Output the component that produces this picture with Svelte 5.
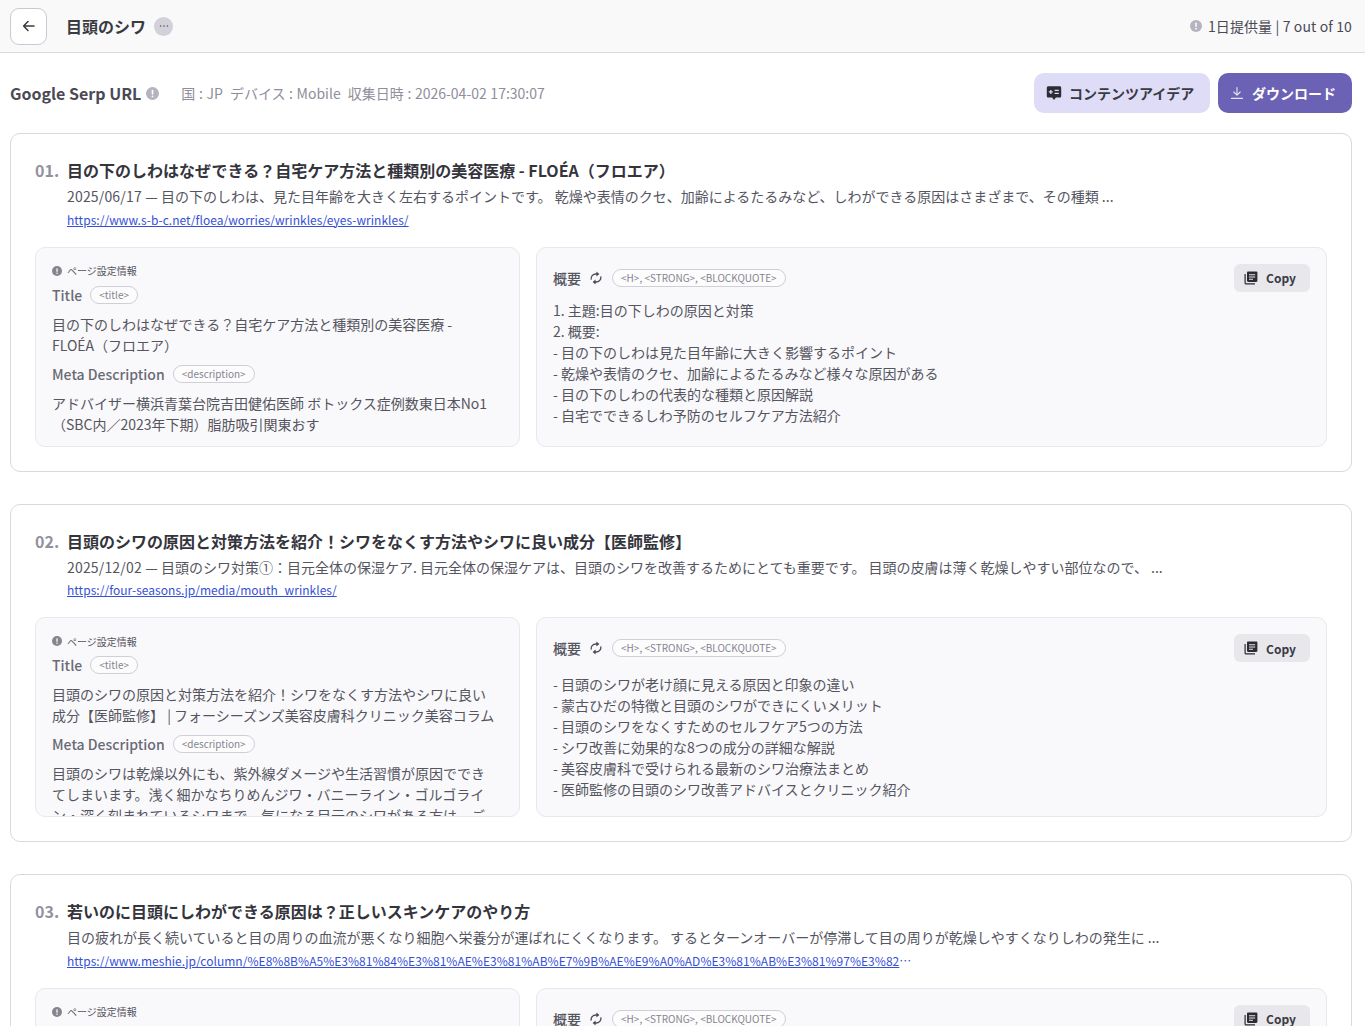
<script>
  const results = [
    {
      no: '01.',
      title: '目の下のしわはなぜできる？自宅ケア方法と種類別の美容医療 - FLOÉA（フロエア）',
      date: '2025/06/17 —',
      desc: ' 目の下のしわは、見た目年齢を大きく左右するポイントです。 乾燥や表情のクセ、加齢によるたるみなど、しわができる原因はさまざまで、その種類 ...',
      url: 'https://www.s-b-c.net/floea/worries/wrinkles/eyes-wrinkles/',
      pageTitle: '目の下のしわはなぜできる？自宅ケア方法と種類別の美容医療 - FLOÉA（フロエア）',
      meta: 'アドバイザー横浜青葉台院吉田健佑医師 ボトックス症例数東日本No1（SBC内／2023年下期）脂肪吸引関東おす',
      scrolled: false,
      summary: [
        '1. 主題:目の下しわの原因と対策',
        '2. 概要:',
        '- 目の下のしわは見た目年齢に大きく影響するポイント',
        '- 乾燥や表情のクセ、加齢によるたるみなど様々な原因がある',
        '- 目の下のしわの代表的な種類と原因解説',
        '- 自宅でできるしわ予防のセルフケア方法紹介'
      ]
    },
    {
      no: '02.',
      title: '目頭のシワの原因と対策方法を紹介！シワをなくす方法やシワに良い成分【医師監修】',
      date: '2025/12/02 —',
      desc: ' 目頭のシワ対策①：目元全体の保湿ケア. 目元全体の保湿ケアは、目頭のシワを改善するためにとても重要です。 目頭の皮膚は薄く乾燥しやすい部位なので、 ...',
      url: 'https://four-seasons.jp/media/mouth_wrinkles/',
      pageTitle: '目頭のシワの原因と対策方法を紹介！シワをなくす方法やシワに良い成分【医師監修】 | フォーシーズンズ美容皮膚科クリニック美容コラム',
      meta: '目頭のシワは乾燥以外にも、紫外線ダメージや生活習慣が原因でできてしまいます。浅く細かなちりめんジワ・バニーライン・ゴルゴライン・深く刻まれているシワまで、気になる目元のシワがある方は、ご相談ください。',
      scrolled: true,
      summary: [
        '- 目頭のシワに悩む方へ原因と対策方法を紹介する記事',
        '- 目頭のシワが老け顔に見える原因と印象の違い',
        '- 蒙古ひだの特徴と目頭のシワができにくいメリット',
        '- 目頭のシワをなくすためのセルフケア5つの方法',
        '- シワ改善に効果的な8つの成分の詳細な解説',
        '- 美容皮膚科で受けられる最新のシワ治療法まとめ',
        '- 医師監修の目頭のシワ改善アドバイスとクリニック紹介'
      ]
    },
    {
      no: '03.',
      title: '若いのに目頭にしわができる原因は？正しいスキンケアのやり方',
      date: '',
      desc: '目の疲れが長く続いていると目の周りの血流が悪くなり細胞へ栄養分が運ばれにくくなります。 するとターンオーバーが停滞して目の周りが乾燥しやすくなりしわの発生に ...',
      url: 'https://www.meshie.jp/column/%E8%8B%A5%E3%81%84%E3%81%AE%E3%81%AB%E7%9B%AE%E9%A0%AD%E3%81%AB%E3%81%97%E3%82%8F%E3%81%8C%E3%81%A7%E3%81%8D%E3%82%8B',
      pageTitle: '若いのに目頭にしわができる原因は？正しいスキンケアのやり方',
      meta: '目の疲れが長く続いていると目の周りの血流が悪くなり細胞へ栄養分が運ばれにくくなります。',
      scrolled: false,
      summary: ['1. 主題:若い世代の目頭のしわの原因', '2. 概要:']
    }
  ];
</script>

{#snippet info(size)}
  <svg class="info" width={size} height={size} viewBox="0 0 16 16" aria-hidden="true">
    <circle cx="8" cy="8" r="8" fill="currentColor" />
    <rect x="7" y="3.4" width="2" height="6" rx="1" fill="#fff" />
    <circle cx="8" cy="11.6" r="1.15" fill="#fff" />
  </svg>
{/snippet}

<div class="page">
  <header class="topbar">
    <button class="back" aria-label="戻る">
      <svg width="16" height="16" viewBox="0 0 16 16" fill="none" stroke="#3a3a42" stroke-width="1.5" stroke-linecap="round" stroke-linejoin="round">
        <path d="M13 8H2.800M7 3.500 2.600 8 7 12.500" />
      </svg>
    </button>
    <h1>目頭のシワ</h1>
    <span class="more">
      <svg width="10" height="10" viewBox="0 0 10 10" fill="#55555f"><circle cx="1.600" cy="5" r="0.8" /><circle cx="5" cy="5" r="0.8" /><circle cx="8.400" cy="5" r="0.8" /></svg>
    </span>
    <div class="quota">
      {@render info(12)}
      <span>1日提供量 | 7 out of 10</span>
    </div>
  </header>

  <main>
    <div class="toolbar">
      <strong>Google Serp URL</strong>
      {@render info(13)}
      <span class="meta-line">国 : JP&nbsp; デバイス : Mobile&nbsp; 収集日時 : 2026-04-02 17:30:07</span>
      <div class="actions">
        <button class="btn light">
          <svg width="16" height="16" viewBox="0 0 16 16" aria-hidden="true">
            <path fill="#2c2c34" d="M2.400 1.300h11.200c.9 0 1.600.7 1.600 1.600v8c0 .9-.7 1.600-1.600 1.600H9.900L8 14.900l-1.900-2.400H2.400c-.9 0-1.600-.7-1.600-1.600v-8c0-.9.7-1.600 1.600-1.600Z" />
            <path stroke="#dedcf6" stroke-width="1.300" d="M2.800 6.900h4M4.800 4.900v4M8.600 5.400h4.200M8.600 8.400h4.200" />
          </svg>
          コンテンツアイデア
        </button>
        <button class="btn solid">
          <svg width="14" height="14" viewBox="0 0 14 14" fill="none" stroke="#e6e4f6" stroke-width="1.100" stroke-linecap="round" stroke-linejoin="round" aria-hidden="true">
            <path d="M7 1.500v7.600M3.800 6 7 9.200 10.200 6M1.500 12.400h11" />
          </svg>
          ダウンロード
        </button>
      </div>
    </div>

    {#each results as item}
      <article class="card">
        <h2><span class="no">{item.no}</span>{item.title}</h2>
        <p class="desc">{#if item.date}<span class="date">{item.date}</span>{/if}{item.desc}</p>
        <a class="url" href={item.url}>{item.url}</a>

        <div class="boxes">
          <section class="box left">
            <div class="box-label">{@render info(10)}<span>ページ設定情報</span></div>
            <div class="field first"><span class="name">Title</span><span class="tag">&lt;title&gt;</span></div>
            <p class="text">{item.pageTitle}</p>
            <div class="field"><span class="name">Meta Description</span><span class="tag">&lt;description&gt;</span></div>
            <p class="text">{item.meta}</p>
          </section>

          <section class="box right">
            <div class="summary-head">
              <span class="name dark">概要</span>
              <svg class="refresh" width="12" height="14" viewBox="0 0 12 14" fill="none" stroke="#4a4a54" stroke-width="1.300" aria-hidden="true">
                <path d="M1.200 8.600C.6 5.600 2.800 3 6 3h1M10.800 5.400C11.400 8.400 9.200 11 6 11H5" />
                <path fill="#4a4a54" stroke="none" d="M6.400.6v4.800L9.400 3zM5.600 8.600v4.800L2.600 11z" />
              </svg>
              <span class="tag">&lt;H&gt;, &lt;STRONG&gt;, &lt;BLOCKQUOTE&gt;</span>
              <button class="copy">
                <svg width="14" height="14" viewBox="0 0 14 14" aria-hidden="true">
                  <path fill="#2c2c34" d="M4.200.6h8c.7 0 1.200.5 1.200 1.200v8c0 .7-.5 1.200-1.200 1.200h-8C3.500 11 3 10.500 3 9.800v-8C3 1.100 3.500.6 4.200.6Z" />
                  <path stroke="#e8e7ec" stroke-width="1.100" d="M5 3.700h6.200M5 6h6.200M5 8.200h4" />
                  <path fill="none" stroke="#2c2c34" stroke-width="1.200" d="M1.100 3v9c0 .5.400.900.900.900h9" />
                </svg>
                Copy
              </button>
            </div>
            <div class="summary">
              <div class:scrolled={item.scrolled}>
                {#each item.summary as line}
                  <div class="line">{line}</div>
                {/each}
              </div>
            </div>
          </section>
        </div>
      </article>
    {/each}
  </main>
</div>

<style>
  :global(body) {
    margin: 0;
    background: #fff;
    font-family: "Noto Sans CJK JP", "Noto Sans", sans-serif;
    color: #3a3a42;
  }
  .page {
    height: 1026px;
    overflow: hidden;
  }
  button {
    font-family: inherit;
    cursor: pointer;
  }
  .topbar {
    height: 52px;
    display: flex;
    align-items: center;
    padding: 0 13px 0 10px;
    background: #f9f9fa;
    border-bottom: 1px solid #d9d8e0;
  }
  .back {
    width: 37px;
    height: 37px;
    display: flex;
    align-items: center;
    justify-content: center;
    padding: 0;
    background: #fff;
    border: 1px solid #c9c8d4;
    border-radius: 9px;
  }
  h1 {
    margin: 0 0 0 19px;
    font-size: 16px;
    font-weight: 700;
    color: #3a3a42;
  }
  .more {
    width: 19px;
    height: 19px;
    margin-left: 8px;
    border-radius: 50%;
    background: #d2d1d9;
    display: flex;
    align-items: center;
    justify-content: center;
  }
  .info {
    flex: none;
    color: #b4b3bf;
  }
  .quota {
    margin-left: auto;
    display: flex;
    align-items: center;
    gap: 6px;
    font-size: 14px;
    letter-spacing: .12px;
    color: #4a4a54;
  }
  main {
    padding: 20px 13px 0 10px;
  }
  .toolbar {
    height: 40px;
    display: flex;
    align-items: center;
    margin-bottom: 20px;
  }
  .toolbar strong {
    font-size: 16px;
    font-weight: 700;
    color: #4a4a54;
    margin-right: 5px;
  }
  .meta-line {
    margin-left: 22px;
    font-size: 14px;
    word-spacing: .45px;
    color: #8f8e9b;
  }
  .actions {
    margin-left: auto;
    display: flex;
    gap: 8px;
  }
  .btn {
    height: 40px;
    border: 0;
    border-radius: 10px;
    display: flex;
    align-items: center;
    gap: 7px;
    font-size: 14px;
    font-weight: 700;
  }
  .btn.light {
    width: 176px;
    padding: 0 0 0 12px;
    background: #dedcf6;
    color: #3a3a42;
  }
  .btn.solid {
    width: 134px;
    padding: 0 0 0 12px;
    gap: 8px;
    background: #6c62b5;
    color: #fff;
  }
  .card {
    height: 338.5px;
    box-sizing: border-box;
    margin-bottom: 32px;
    padding: 24px;
    border: 1px solid #d9d8e0;
    border-radius: 10px;
    background: #fff;
  }
  h2 {
    margin: 0;
    font-size: 16px;
    font-weight: 700;
    line-height: 24px;
    color: #34343c;
    white-space: nowrap;
  }
  .no {
    display: inline-block;
    width: 32px;
    color: #92919e;
  }
  .desc {
    margin: 4px 0 0 32px;
    font-size: 14px;
    line-height: 21px;
    color: #55555f;
    white-space: nowrap;
  }
  .date {
    letter-spacing: .17px;
  }
  .url {
    display: block;
    width: 847px;
    margin: 2.5px 0 0 32px;
    font-size: 12px;
    line-height: 20px;
    letter-spacing: .035px;
    color: #3550d8;
    white-space: nowrap;
    overflow: hidden;
    text-overflow: ellipsis;
  }
  .boxes {
    display: grid;
    grid-template-columns: 485px 1fr;
    gap: 16px;
    margin-top: 17px;
  }
  .box {
    height: 200px;
    box-sizing: border-box;
    overflow: hidden;
    background: #f9f9fb;
    border: 1px solid #e8e7ed;
    border-radius: 10px;
    padding: 16px;
    font-size: 14px;
    color: #55555f;
  }
  .left {
    padding-right: 24px;
  }
  .box-label {
    display: flex;
    align-items: center;
    gap: 5px;
    height: 14px;
    font-size: 10px;
    color: #55555f;
  }
  .box-label .info {
    color: #85848f;
  }
  .field {
    display: flex;
    align-items: center;
    gap: 8px;
    height: 24px;
  }
  .field.first {
    margin-top: 5px;
  }
  .name {
    font-size: 14px;
    font-weight: 500;
    color: #6a6a76;
  }
  .name.dark {
    color: #55555f;
  }
  .tag {
    height: 18px;
    line-height: 16px;
    box-sizing: border-box;
    padding: 0 8px;
    border: 1px solid #cfced9;
    border-radius: 9px;
    font-size: 10px;
    color: #85848f;
    background: #fcfcfd;
  }
  .text {
    margin: 7px 0 6px;
    line-height: 21px;
  }
  .summary-head {
    display: flex;
    align-items: center;
    height: 28px;
    font-size: 14px;
  }
  .refresh {
    margin: 0 10px 0 9px;
  }
  .copy {
    margin-left: auto;
    width: 76px;
    height: 28px;
    padding: 0 4px 0 0;
    border: 0;
    border-radius: 6px;
    background: #e8e7ec;
    display: flex;
    align-items: center;
    justify-content: center;
    gap: 8px;
    font-size: 12px;
    font-weight: 700;
    color: #3a3a42;
  }
  .summary {
    height: 141px;
    margin-top: 8px;
    overflow: hidden;
    line-height: 21px;
    color: #55555f;
  }
  .scrolled {
    margin-top: -18.5px;
  }
  .scrolled .line:first-child {
    margin-bottom: 1px;
  }
</style>
